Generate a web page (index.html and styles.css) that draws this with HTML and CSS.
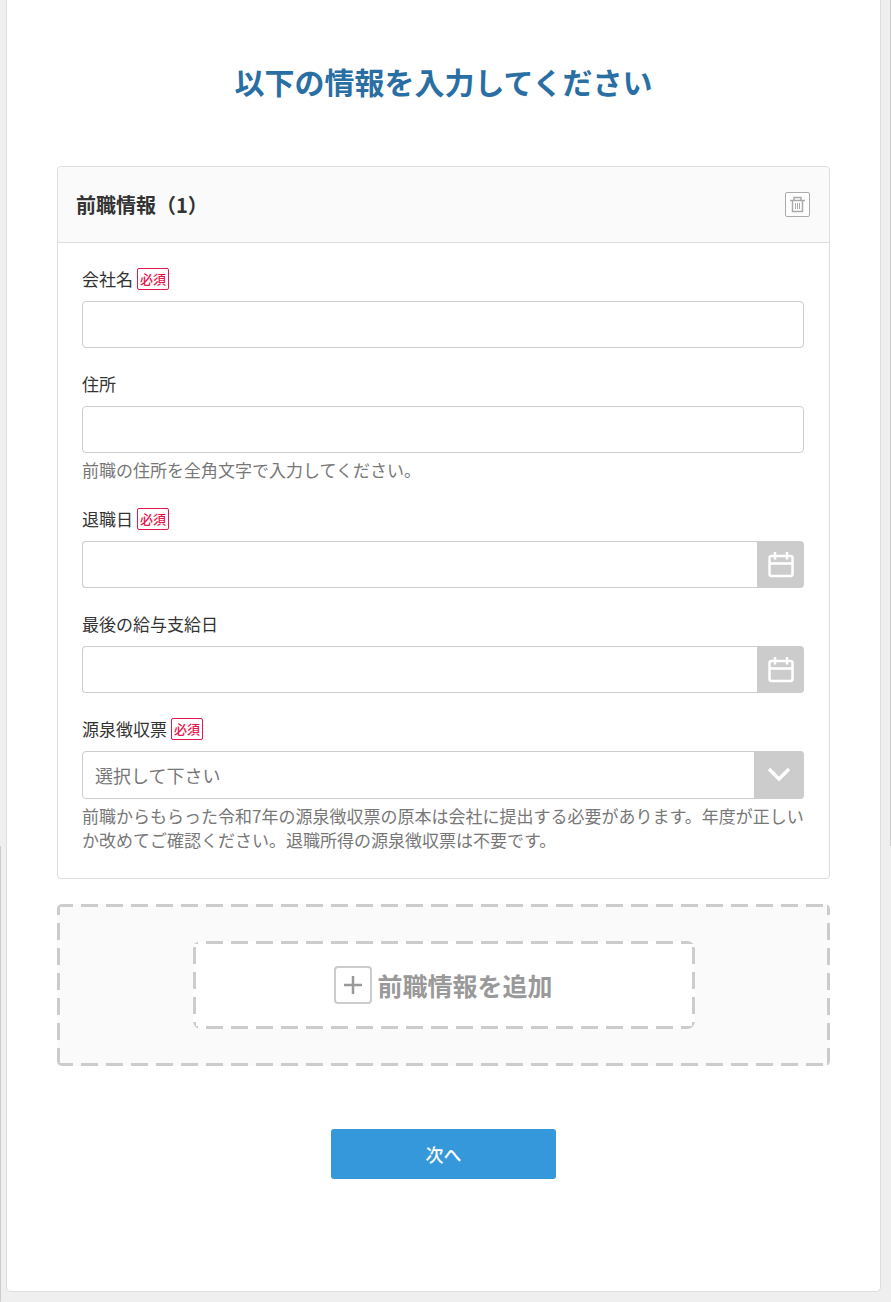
FILE: index.html
```html
<!DOCTYPE html>
<html lang="ja">
<head>
    <meta charset="UTF-8">
    <meta name="viewport" content="width=device-width, initial-scale=1.0">
    <title>前職情報</title>
    <link rel="stylesheet" href="styles.css">
</head>
<body>
    <main class="sheet">
        <h1 class="title">以下の情報を入力してください</h1>
        <form class="job-form">
            <section class="card">
                <div class="card-header">
                    <h2>前職情報（1）</h2>
                    <button type="button" class="delete-btn" aria-label="削除">
                        <svg width="17" height="17" viewBox="0 0 17 17" fill="none" stroke="#aaa">
                            <path d="M1 4.5h15M5 4V1.5h7V4" stroke-width="1.5"/>
                            <path d="M3.5 5v10.5h10V5" stroke-width="1.5"/>
                            <path d="M6.5 7v6M8.5 7v6M10.5 7v6"/>
                        </svg>
                    </button>
                </div>
                <div class="card-body">
                    <div class="field">
                        <div class="label-row">
                            <label for="company">会社名</label>
                            <span class="required">必須</span>
                        </div>
                        <input type="text" id="company" class="text-input">
                    </div>
                    <div class="field">
                        <div class="label-row">
                            <label for="address">住所</label>
                        </div>
                        <input type="text" id="address" class="text-input">
                        <p class="help">前職の住所を全角文字で入力してください。</p>
                    </div>
                    <div class="field">
                        <div class="label-row">
                            <label for="retire-date">退職日</label>
                            <span class="required">必須</span>
                        </div>
                        <div class="date-group">
                            <input type="text" id="retire-date" class="text-input">
                            <button type="button" class="date-btn" aria-label="日付を選択">
                                <svg width="26" height="26" viewBox="0 0 26 26" fill="none" stroke="#fff" stroke-width="2.5">
                                    <rect x="1.5" y="4" width="23" height="20" rx="2"/>
                                    <path d="M2 11.5h22M7 0v7.5M19 0v7.5"/>
                                </svg>
                            </button>
                        </div>
                    </div>
                    <div class="field">
                        <div class="label-row">
                            <label for="last-pay-date">最後の給与支給日</label>
                        </div>
                        <div class="date-group">
                            <input type="text" id="last-pay-date" class="text-input">
                            <button type="button" class="date-btn" aria-label="日付を選択">
                                <svg width="26" height="26" viewBox="0 0 26 26" fill="none" stroke="#fff" stroke-width="2.5">
                                    <rect x="1.5" y="4" width="23" height="20" rx="2"/>
                                    <path d="M2 11.5h22M7 0v7.5M19 0v7.5"/>
                                </svg>
                            </button>
                        </div>
                    </div>
                    <div class="field">
                        <div class="label-row">
                            <label for="withholding">源泉徴収票</label>
                            <span class="required">必須</span>
                        </div>
                        <div class="select-group">
                            <select id="withholding">
                                <option>選択して下さい</option>
                            </select>
                            <span class="select-arrow">
                                <svg width="22" height="16" viewBox="0 0 22 16" fill="none" stroke="#fff" stroke-width="3.5">
                                    <path d="M1 2l10 10 10-10"/>
                                </svg>
                            </span>
                        </div>
                        <p class="help">前職からもらった令和7年の源泉徴収票の原本は会社に提出する必要があります。年度が正しいか改めてご確認ください。退職所得の源泉徴収票は不要です。</p>
                    </div>
                </div>
            </section>

            <div class="add-area dashed">
                <button type="button" class="add-btn dashed">
                    <svg width="38" height="38" viewBox="0 0 38 38" fill="none">
                        <rect x="1" y="1" width="36" height="36" rx="3" stroke="#ccc" stroke-width="2"/>
                        <path d="M19 10v18M10 19h18" stroke="#999" stroke-width="2.5"/>
                    </svg>
                    <span>前職情報を追加</span>
                </button>
            </div>

            <button type="submit" class="next-btn">次へ</button>
        </form>
    </main>
</body>
</html>
```
FILE: styles.css
```css
* {
    box-sizing: border-box;
}

body {
    margin: 0;
    padding: 0 10px 10px 6px;
    color: #333;
    font-family: "Noto Sans CJK JP", sans-serif;
    font-size: 17px;
    line-height: 24px;
    background-color: #efefef;
    /* ページ両端の細い線 */
    background-image: linear-gradient(#ccc, #ccc), linear-gradient(#ccc, #ccc);
    background-position: left bottom, right top;
    background-size: 1px 35%, 1px 65%;
    background-repeat: no-repeat;
}

h1, h2, p {
    margin: 0;
}

button, input, select {
    font-family: inherit;
}

button {
    padding: 0;
    cursor: pointer;
}

svg {
    display: block;
}

.sheet {
    padding: 58px 50px 112px;
    background-color: #fff;
    border: 1px solid #ddd;
    border-top: none;
    border-radius: 0 0 5px 5px;
}

.title {
    margin-bottom: 62px;
    color: #2a6fa3;
    font-size: 30px;
    line-height: 46px;
    text-align: center;
}

.job-form {
    display: flex;
    flex-direction: column;
}

/* 前職情報カード */
.card {
    border: 1px solid #ddd;
    border-radius: 4px;
}

.card-header {
    display: flex;
    justify-content: space-between;
    align-items: center;
    padding: 25px 19px 25px 18px;
    background-color: #fafafa;
    border-bottom: 1px solid #ddd;
    border-radius: 4px 4px 0 0;
}

.card-header h2 {
    font-size: 20px;
    line-height: 25px;
}

.delete-btn {
    display: flex;
    justify-content: center;
    align-items: center;
    width: 25px;
    height: 25px;
    background-color: #fff;
    border: 1px solid #aaa;
    border-radius: 2px;
}

.card-body {
    display: flex;
    flex-direction: column;
    gap: 25px;
    padding: 25px 25px 25px 24px;
}

.label-row {
    display: flex;
    align-items: flex-start;
    gap: 4px;
    min-height: 24px;
    margin-bottom: 9px;
    line-height: 22px;
}

.required {
    padding: 0 2px;
    color: #e5174f;
    font-size: 13px;
    font-weight: 500;
    line-height: 20px;
    border: 1px solid #e5174f;
    border-radius: 2px;
}

.text-input {
    display: block;
    width: 100%;
    height: 47px;
    padding: 0 12px;
    font-size: 18px;
    background-color: #fff;
    border: 1px solid #ccc;
    border-radius: 4px;
}

.date-group {
    display: flex;
}

.date-group .text-input {
    flex: 1;
    min-width: 0;
    border-right: none;
    border-radius: 4px 0 0 4px;
}

.date-btn {
    display: flex;
    justify-content: center;
    align-items: center;
    width: 47px;
    background-color: #ccc;
    border: none;
    border-radius: 0 4px 4px 0;
}

.select-group {
    position: relative;
}

.select-group select {
    display: block;
    width: 100%;
    height: 48px;
    padding: 0 60px 0 12px;
    color: #777;
    font-size: 18px;
    background-color: #fff;
    border: 1px solid #ccc;
    border-radius: 4px;
    appearance: none;
}

.select-arrow {
    position: absolute;
    top: 0;
    right: 0;
    bottom: 0;
    display: flex;
    justify-content: center;
    align-items: center;
    width: 50px;
    background-color: #ccc;
    border-radius: 0 4px 4px 0;
    pointer-events: none;
}

.help {
    margin: 5px -8px 1px 0;
    color: #777;
}

/* 破線の枠 */
.dashed {
    --dash-x: -1px;
    --dash-y: -6px;
    --across: linear-gradient(90deg, #ccc 17px, transparent 17px);
    --down: linear-gradient(#ccc 17px, transparent 17px);
    background-image: var(--across), var(--across), var(--down), var(--down);
    background-position: var(--dash-x) top, var(--dash-x) bottom, left var(--dash-y), right var(--dash-y);
    background-size: 25px 3px, 25px 3px, 3px 25px, 3px 25px;
    background-repeat: repeat-x, repeat-x, repeat-y, repeat-y;
}

.add-area {
    display: flex;
    justify-content: center;
    margin-top: 25px;
    padding: 37px;
    background-color: #fafafa;
    border-radius: 5px;
}

.add-btn {
    --dash-x: 13px;
    --dash-y: 6px;
    display: flex;
    justify-content: center;
    align-items: center;
    gap: 5px;
    flex: 0 1 502px;
    padding: 25px 0;
    color: #999;
    font-size: 25px;
    font-weight: bold;
    line-height: 34px;
    background-color: #fff;
    border: none;
    border-radius: 8px;
}

.next-btn {
    align-self: center;
    width: 225px;
    margin-top: 63px;
    color: #fff;
    font-size: 18px;
    font-weight: 500;
    line-height: 50px;
    background-color: #3498db;
    border: none;
    border-radius: 3px;
}
```
